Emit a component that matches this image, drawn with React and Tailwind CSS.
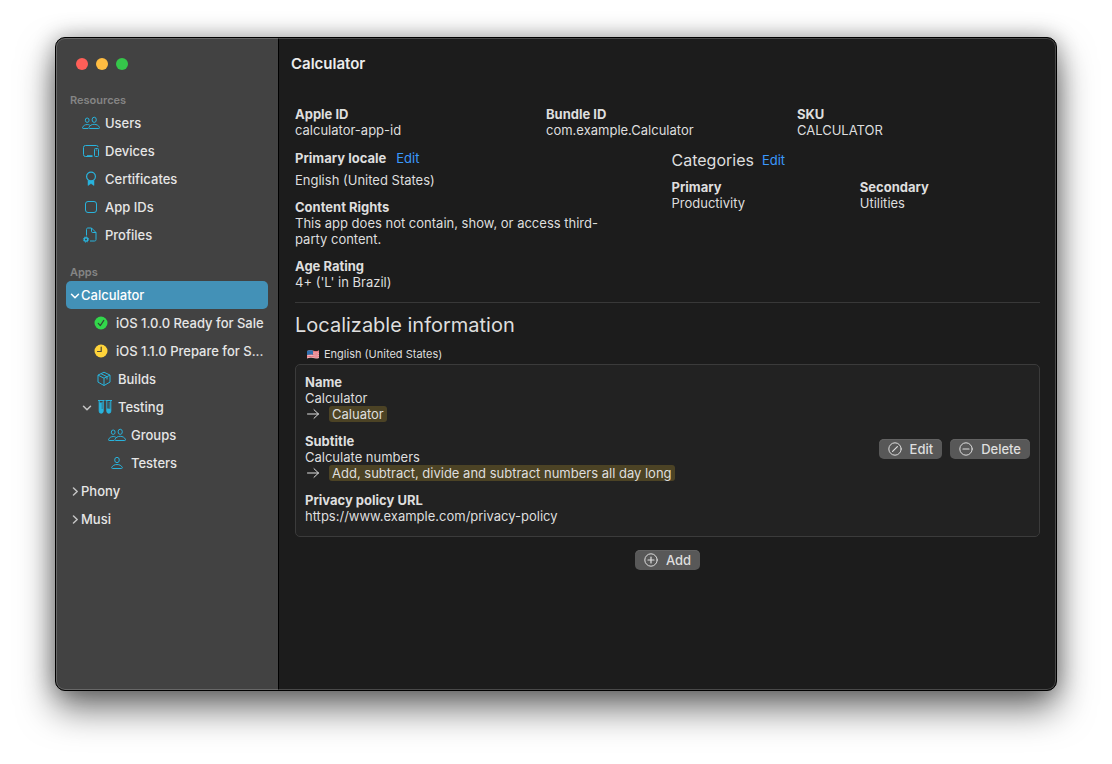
import { clsx } from 'clsx';

function UsersIcon() {
  return (
    <svg width="18" height="14" viewBox="0 0 18 14" fill="none" stroke="currentColor" aria-hidden="true">
      <ellipse cx="5.2" cy="4.2" rx="1.9" ry="2.2" />
      <ellipse cx="12.2" cy="3.8" rx="2.1" ry="2.6" />
      <path d="M6.4 12.5H1.1C.5 12.5.4 12 .6 11.4 1.200 9.800 3 8.500 5.200 8.500c1 0 1.900.3 2.600.7" />
      <path d="M7.600 12.500h9.200c.7 0 .9-.5.6-1.200-.7-1.700-2.700-3-5.200-3s-4.500 1.300-5.200 3c-.3.7-.1 1.200.6 1.200z" />
    </svg>
  );
}

function UserIcon() {
  return (
    <svg width="18" height="14" viewBox="0 0 18 14" fill="none" stroke="currentColor" aria-hidden="true">
      <ellipse cx="9" cy="4" rx="2.300" ry="2.700" />
      <path d="M4.500 12.500h9c.8 0 1-.5.7-1.200-.7-1.600-2.700-2.800-5.200-2.800s-4.500 1.200-5.200 2.800c-.3.7-.1 1.200.7 1.200z" />
    </svg>
  );
}

function DevicesIcon() {
  return (
    <svg width="18" height="14" viewBox="0 0 18 14" fill="none" stroke="currentColor" aria-hidden="true">
      <path d="M10.500 12.500h-7a2 2 0 0 1-2-2v-7a2 2 0 0 1 2-2h11a1.500 1.500 0 0 1 1.500 1.500" />
      <path d="M5 11.500h5.500" strokeWidth=".8" />
      <rect x="12.500" y="4.500" width="4" height="8" rx="1" />
      <path d="M13.800 6h1.400" strokeWidth=".8" />
    </svg>
  );
}

function CertificateIcon() {
  return (
    <svg width="18" height="16" viewBox="0 0 18 16" fill="none" stroke="currentColor" aria-hidden="true">
      <circle cx="9" cy="5.500" r="4.400" strokeWidth="1.200" />
      <path d="M6 9.200v5.300l3-2 3 2V9.200c-1.700 1.200-4.300 1.200-6 0z" fill="currentColor" strokeWidth=".5" />
    </svg>
  );
}

function AppIdIcon() {
  return (
    <svg width="18" height="14" viewBox="0 0 18 14" fill="none" stroke="currentColor" aria-hidden="true">
      <rect x="3.500" y="1.500" width="11" height="11" rx="2.500" />
    </svg>
  );
}

function ProfileIcon() {
  return (
    <svg width="18" height="16" viewBox="0 0 18 16" fill="none" stroke="currentColor" aria-hidden="true">
      <path d="M4.500 8.500V2.500c0-1 .5-1.500 1.500-1.500h3.500l4.500 4.500v7c0 1-.5 1.500-1.500 1.500H8" />
      <path d="M9.500 1v3.300c0 .8.4 1.200 1.200 1.200H14" />
      <circle cx="4" cy="12.500" r="1.700" strokeWidth="1.400" />
      <circle cx="4" cy="12.500" r="2.700" strokeWidth="1" strokeDasharray="1.060 1.060" />
    </svg>
  );
}

function BuildsIcon() {
  return (
    <svg width="16" height="16" viewBox="0 0 16 16" fill="none" stroke="currentColor" strokeLinejoin="round" aria-hidden="true">
      <path d="M8 1.200l6 2.900v7L8 14.500l-6-3.400v-7z" />
      <path d="M2 4.100l6 3.100 6-3.100M8 7.200v7.300M5 2.700l6 3v2.800" />
    </svg>
  );
}

function TestTubesIcon() {
  return (
    <svg width="16" height="16" viewBox="0 0 16 16" fill="none" stroke="currentColor" aria-hidden="true">
      <path d="M1 1.500h6.500M8.500 1.500H15" />
      <path d="M2.200 1.500v10.700a2 2 0 0 0 4 0V1.500M9.800 1.500v10.700a2 2 0 0 0 4 0V1.500" />
      <path d="M2.200 3.500h4v8.700a2 2 0 0 1-4 0zM9.800 9.500h4v2.700a2 2 0 0 1-4 0z" fill="currentColor" stroke="none" />
      <path d="M13.500 4h-2M13.500 6h-2M13.500 8h-2" strokeWidth=".8" />
      <path d="M6 5H4.500M6 7H4.500M6 9H4.500" stroke="#424242" strokeWidth=".7" />
    </svg>
  );
}

function ReadyIcon() {
  return (
    <svg width="14" height="14" viewBox="0 0 14 14" fill="none" aria-hidden="true">
      <circle cx="7" cy="7" r="6.500" fill="#32d74b" />
      <path d="M4.300 7.300l2 2.300 3.500-5.200" stroke="#2f4a34" strokeWidth="1.200" strokeLinecap="round" strokeLinejoin="round" />
    </svg>
  );
}

function ClockIcon() {
  return (
    <svg width="14" height="14" viewBox="0 0 14 14" fill="none" aria-hidden="true">
      <circle cx="7" cy="7" r="6.500" fill="#ffd43a" />
      <path d="M7.200 3v4.500H3.500" stroke="#4b4636" strokeWidth="1.200" strokeLinecap="round" strokeLinejoin="round" />
    </svg>
  );
}

function Chevron({ open }) {
  return (
    <svg width="10" height="10" viewBox="0 0 10 10" fill="none" stroke="currentColor" strokeWidth="1.500" strokeLinecap="round" strokeLinejoin="round" aria-hidden="true">
      <path d={open ? 'M1.500 4.200l3.500 3.600 3.500-3.600' : 'M3.500 2l3.700 3.500L3.500 9'} />
    </svg>
  );
}

function ArrowIcon() {
  return (
    <svg width="16" height="16" viewBox="0 0 16 16" fill="none" stroke="currentColor" strokeLinecap="round" strokeLinejoin="round" aria-hidden="true">
      <path d="M2.500 8h11M9 3.700L13.500 8 9 12.300" />
    </svg>
  );
}

const circlePaths = {
  edit: 'M4.600 9.400l4.800-4.800',
  delete: 'M4 7h6',
  add: 'M4 7h6M7 4v6',
};

function CircleIcon({ name }) {
  return (
    <svg width="14" height="14" viewBox="0 0 14 14" fill="none" stroke="currentColor" strokeLinecap="round" aria-hidden="true">
      <circle cx="7" cy="7" r="6.200" />
      <path d={circlePaths[name]} strokeWidth="1.200" />
    </svg>
  );
}

function FlagIcon() {
  return (
    <svg width="12" height="9" viewBox="0 0 12 9" aria-hidden="true">
      <path d="M0 1c2-.9 4-.7 6-.3s4 .6 6-.2v7.400c-2 .8-4 .6-6 .2s-4-.5-6 .4z" fill="#f2b8bd" />
      <path d="M0 3.100c2-.8 4-.6 6-.3s4 .6 6-.2M0 5c2-.8 4-.6 6-.3s4 .6 6-.2M0 7c2-.8 4-.6 6-.3s4 .6 6-.2M6 1.300c2 .3 4 .5 6-.2" stroke="#e2636e" strokeWidth=".9" fill="none" />
      <path d="M0 1c2-.9 4-.7 6-.3v4C4 4.300 2 4.200 0 5z" fill="#2f6fae" />
    </svg>
  );
}

const resources = [
  { label: 'Users', icon: UsersIcon },
  { label: 'Devices', icon: DevicesIcon },
  { label: 'Certificates', icon: CertificateIcon },
  { label: 'App IDs', icon: AppIdIcon },
  { label: 'Profiles', icon: ProfileIcon },
];

function SectionLabel({ children }) {
  return <h2 className="pl-1 text-[11px] leading-[18px] font-semibold text-[#858585]">{children}</h2>;
}

function Row({ icon: Icon, label, chevron, active, className }) {
  return (
    <li>
      <a
        href="#"
        aria-current={active ? 'page' : undefined}
        className={clsx(
          'flex h-7 items-center rounded-[5px] pr-1',
          active ? 'bg-[#4391b7] text-white' : 'text-[#e6e6e6]',
          className
        )}
      >
        {chevron && (
          <span className={active ? 'text-white' : 'text-[#c4c4c4]'}>
            <Chevron open={chevron === 'open'} />
          </span>
        )}
        {Icon && (
          <span className="shrink-0 text-[#29b3dc]">
            <Icon />
          </span>
        )}
        <span className="whitespace-nowrap">{label}</span>
      </a>
    </li>
  );
}

function Sidebar() {
  return (
    <nav className="w-[223px] shrink-0 border-r border-black bg-[#424242] px-2.5 pt-5 font-medium">
      <div className="mb-[21px] flex gap-2 pl-2.5">
        <button type="button" aria-label="Close" className="size-3 rounded-full bg-[#ff5f58]" />
        <button type="button" aria-label="Minimize" className="size-3 rounded-full bg-[#ffbd42]" />
        <button type="button" aria-label="Zoom" className="size-3 rounded-full bg-[#35c64a]" />
      </div>
      <SectionLabel>Resources</SectionLabel>
      <ul className="mb-3.5">
        {resources.map((item) => (
          <Row key={item.label} {...item} className="gap-[5px] pl-4" />
        ))}
      </ul>
      <SectionLabel>Apps</SectionLabel>
      <ul>
        <Row label="Calculator" chevron="open" active className="gap-[1px] pl-1" />
        <Row label="iOS 1.0.0 Ready for Sale" icon={ReadyIcon} className="gap-2 pl-7" />
        <Row label="iOS 1.1.0 Prepare for S..." icon={ClockIcon} className="gap-2 pl-7" />
        <Row label="Builds" icon={BuildsIcon} className="gap-1.5 pl-[30px]" />
        <Row label="Testing" icon={TestTubesIcon} chevron="open" className="gap-[5px] pl-4" />
        <Row label="Groups" icon={UsersIcon} className="gap-[5px] pl-[42px]" />
        <Row label="Testers" icon={UserIcon} className="gap-[5px] pl-[42px]" />
        <Row label="Phony" chevron="closed" className="gap-[1px] pl-1" />
        <Row label="Musi" chevron="closed" className="gap-[1px] pl-1" />
      </ul>
    </nav>
  );
}

function Field({ label, children, change }) {
  return (
    <div>
      <dt className="font-bold">{label}</dt>
      <dd>{children}</dd>
      {change && (
        <dd className="flex items-center gap-2">
          <ArrowIcon />
          <span className="rounded-[3px] bg-[#4c4325] px-[3px]">{change}</span>
        </dd>
      )}
    </div>
  );
}

function LinkButton({ label }) {
  return (
    <button type="button" aria-label={label} className="text-[#3b99fc]">
      Edit
    </button>
  );
}

function ActionButton({ icon, children }) {
  return (
    <button type="button" className="flex h-5 items-center gap-2 rounded-[5px] bg-[#585858] px-[9px] font-medium shadow-[inset_0_1px_0_#636363]">
      <CircleIcon name={icon} />
      {children}
    </button>
  );
}

export default function App() {
  return (
    <div className="flex min-h-screen bg-white px-[55px] pt-[37px] pb-[73px] font-['Inter',sans-serif] text-[13px] leading-4 text-[#dedede]">
      <div className="relative flex flex-1 overflow-hidden rounded-[10px] border border-black bg-[#1c1c1c] shadow-[0_18px_36px_rgba(0,0,0,0.55),0_0_22px_rgba(0,0,0,0.3)]">
        <Sidebar />
        <main className="min-w-0 flex-1">
          <header className="flex h-[52px] items-center px-3">
            <h1 className="text-[15px] leading-5 font-semibold text-[#ececec]">Calculator</h1>
          </header>
          <div className="px-4 pt-4 pb-6">
            <dl className="grid grid-cols-3 gap-2">
              <Field label="Apple ID">calculator-app-id</Field>
              <Field label="Bundle ID">com.example.Calculator</Field>
              <Field label="SKU">CALCULATOR</Field>
            </dl>

            <div className="mt-3 grid grid-cols-2 gap-2">
              <dl className="flex max-w-xs flex-col gap-[11px]">
                <div>
                  <dt className="mb-1.5 flex gap-2.5 font-bold">
                    Primary locale
                    <span className="font-normal">
                      <LinkButton label="Edit primary locale" />
                    </span>
                  </dt>
                  <dd>English (United States)</dd>
                </div>
                <Field label="Content Rights">
                  This app does not contain, show, or access third-party content.
                </Field>
                <Field label="Age Rating">4+ ('L' in Brazil)</Field>
              </dl>
              <section>
                <div className="mb-[9px] flex items-center gap-2">
                  <h2 className="text-[16px] leading-5">Categories</h2>
                  <LinkButton label="Edit categories" />
                </div>
                <dl className="grid grid-cols-2 gap-2">
                  <Field label="Primary">Productivity</Field>
                  <Field label="Secondary">Utilities</Field>
                </dl>
              </section>
            </div>

            <hr className="mt-3 border-[#383838]" />

            <section>
              <h2 className="mt-2 text-[20px] leading-7">Localizable information</h2>
              <h3 className="mt-[7px] flex items-center gap-[5px] pl-3 text-[11px] leading-4">
                <FlagIcon />
                English (United States)
              </h3>
              <div className="mt-0.5 flex items-center rounded-[5px] border border-[#3b3b3b] bg-[#222] px-[9px] pt-[9px] pb-3">
                <dl className="flex flex-1 flex-col gap-[11px]">
                  <Field label="Name" change="Caluator">Calculator</Field>
                  <Field label="Subtitle" change="Add, subtract, divide and subtract numbers all day long">
                    Calculate numbers
                  </Field>
                  <Field label="Privacy policy URL">https://www.example.com/privacy-policy</Field>
                </dl>
                <div className="flex gap-2">
                  <ActionButton icon="edit">Edit</ActionButton>
                  <ActionButton icon="delete">Delete</ActionButton>
                </div>
              </div>
              <div className="mt-[13px] flex justify-center">
                <ActionButton icon="add">Add</ActionButton>
              </div>
            </section>
          </div>
        </main>
        {/* light bevel just inside the black window edge */}
        <div className="pointer-events-none absolute inset-0 rounded-[9px] border border-white/20" />
      </div>
    </div>
  );
}
